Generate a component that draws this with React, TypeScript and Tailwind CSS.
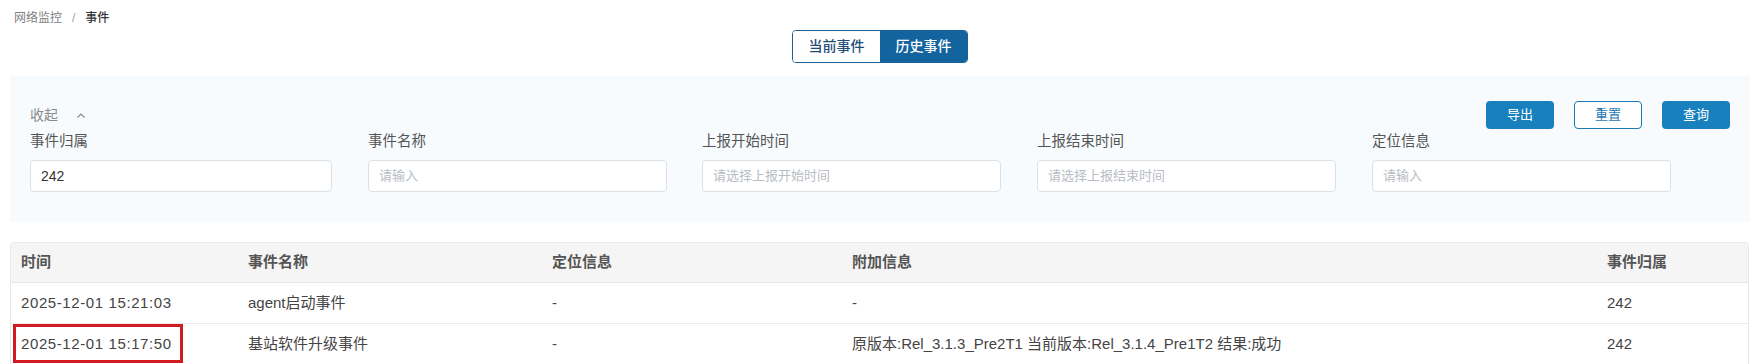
import React from "react";

const FONT = { fontFamily: '"Liberation Sans", "Noto Sans CJK SC", sans-serif' };

const cols = ["w-[227px]", "w-[304px]", "w-[300px]", "w-[755px]", "flex-1"];

function Cell({ i, children, extra = "" }: { i: number; children?: React.ReactNode; extra?: string }) {
  return <div className={`${cols[i]} pl-[10px] flex items-center ${extra}`}>{children}</div>;
}

const fields = [
  { label: "事件归属", value: "242", ph: "", w: "w-[302px]" },
  { label: "事件名称", value: "", ph: "请输入", w: "w-[299px]" },
  { label: "上报开始时间", value: "", ph: "请选择上报开始时间", w: "w-[299px]" },
  { label: "上报结束时间", value: "", ph: "请选择上报结束时间", w: "w-[299px]" },
  { label: "定位信息", value: "", ph: "请输入", w: "w-[299px]" },
];

export default function App() {
  return (
    <div className="w-[1752px] h-[364px] bg-white overflow-hidden pl-[10px]" style={FONT}>
      <div className="w-[1740px]">
        <div className="mt-[8px] h-[20px] leading-[20px] text-[12px] pl-[4px] flex gap-[10px]">
          <span className="text-[#808080]">网络监控</span>
          <span className="text-[#a0a0a0]">/</span>
          <span className="text-[#333] font-medium">事件</span>
        </div>
        <div className="mt-[2px] flex justify-center">
          <div className="flex h-[33px] rounded-[4px] overflow-hidden border border-[#1a609a]">
            <div className="w-[87px] flex items-center justify-center bg-white text-[14px] font-medium text-[#1f4d78]">当前事件</div>
            <div className="w-[87px] flex items-center justify-center bg-[#13639f] text-[14px] font-medium text-white">历史事件</div>
          </div>
        </div>
        <div className="mt-[13px] bg-[#f7fbfe] pt-[25px] pb-[30px] pl-[20px] pr-[20px]">
          <div className="flex items-center justify-between h-[28px]">
            <div className="flex items-center text-[14px] text-[#8a8a8a]">
              <span>收起</span>
              <svg className="ml-[18px]" width="10" height="7" viewBox="0 0 10 7" fill="none">
                <path d="M1.5 5.5 L5 2 L8.5 5.5" stroke="#8a8a8a" strokeWidth="1.2" />
              </svg>
            </div>
            <div className="flex gap-[20px]">
              <button className="w-[68px] h-[28px] rounded-[4px] bg-[#1880bc] text-white text-[13px]">导出</button>
              <button className="w-[68px] h-[28px] rounded-[4px] bg-white border border-[#1e78b4] text-[#1e78b4] text-[13px]">重置</button>
              <button className="w-[68px] h-[28px] rounded-[4px] bg-[#1880bc] text-white text-[13px]">查询</button>
            </div>
          </div>
          <div className="mt-[1px] grid grid-cols-[338px_334px_335px_335px_300px]">
            {fields.map((f) => (
              <div key={f.label} className={f.w}>
                <div className="h-[22px] leading-[22px] text-[14.5px] text-[#555]">{f.label}</div>
                <div className="mt-[8px] h-[32px] bg-white border border-[#dcdfe6] rounded-[4px] px-[10px] flex items-center">
                  {f.value ? (
                    <span className="text-[14px] text-[#333]">{f.value}</span>
                  ) : (
                    <span className="text-[13px] text-[#b8bcc4]">{f.ph}</span>
                  )}
                </div>
              </div>
            ))}
          </div>
        </div>
        <div className="mt-[20px] w-[1739px] border border-[#e8e8ea] rounded-t-[4px] text-[15px]">
          <div className="flex h-[40px] bg-[#f5f5f6] border-b border-[#e6e6e8] font-bold text-[#555]">
            <Cell i={0}>时间</Cell>
            <Cell i={1}>事件名称</Cell>
            <Cell i={2}>定位信息</Cell>
            <Cell i={3}>附加信息</Cell>
            <Cell i={4}>事件归属</Cell>
          </div>
          <div className="flex h-[41px] border-b border-[#ebebed] text-[#444]">
            <Cell i={0}><span className="tracking-[0.6px]">2025-12-01 15:21:03</span></Cell>
            <Cell i={1}>agent启动事件</Cell>
            <Cell i={2}>-</Cell>
            <Cell i={3}>-</Cell>
            <Cell i={4}>242</Cell>
          </div>
          <div className="flex h-[41px] border-b border-[#ebebed] text-[#444]">
            <Cell i={0} extra="relative">
              <span className="tracking-[0.6px]">2025-12-01 15:17:50</span>
              <div className="absolute left-[2px] top-0 w-[170px] h-[39px] border-[3px] border-[#d01c20]" />
            </Cell>
            <Cell i={1}>基站软件升级事件</Cell>
            <Cell i={2}>-</Cell>
            <Cell i={3}>原版本:Rel_3.1.3_Pre2T1 当前版本:Rel_3.1.4_Pre1T2 结果:成功</Cell>
            <Cell i={4}>242</Cell>
          </div>
        </div>
      </div>
    </div>
  );
}
